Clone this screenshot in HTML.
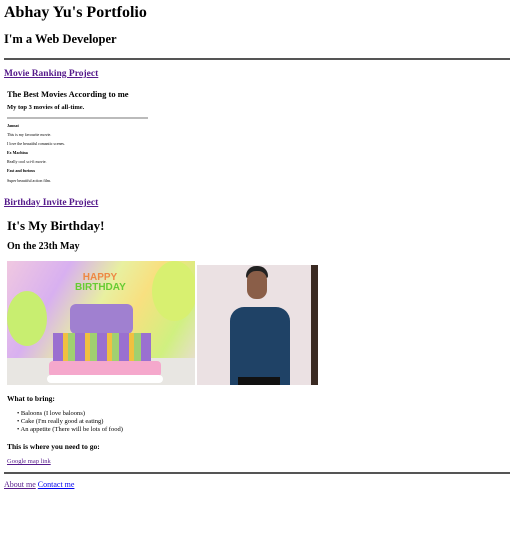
<!DOCTYPE html>
<html><head><meta charset="utf-8"><style>
body{margin:0;width:510px;height:539px;background:#fff;font-family:"Liberation Serif",serif;color:#000;position:relative;overflow:hidden}
.a{position:absolute;white-space:nowrap;margin:0}
a{color:#551a8b}
.lk{font-size:9.5px;font-weight:bold}
</style></head><body>
<div class="a" style="left:4px;top:4px;font-size:16px;font-weight:bold">Abhay Yu's Portfolio</div>
<div class="a" style="left:4px;top:32px;font-size:12.5px;font-weight:bold">I'm a Web Developer</div>
<div class="a" style="left:4px;top:58px;width:506px;height:2px;background:#555"></div>
<div class="a lk" style="left:4px;top:69px"><a href="#">Movie Ranking Project</a></div>
<div class="a" style="left:7px;top:89px;font-size:8.5px;font-weight:bold">The Best Movies According to me</div>
<div class="a" style="left:7px;top:104px;font-size:6.5px;font-weight:bold">My top 3 movies of all-time.</div>
<div class="a" style="left:7px;top:117px;width:141px;height:2px;background:#bbb"></div>
<div class="a" style="left:7px;top:123px;font-size:4px;font-weight:bold">Jannat</div>
<div class="a" style="left:7px;top:132px;font-size:4px">This is my favourite movie.</div>
<div class="a" style="left:7px;top:141px;font-size:4px">I love the beautiful romantic scenes.</div>
<div class="a" style="left:7px;top:150px;font-size:4px;font-weight:bold">Ex Machina</div>
<div class="a" style="left:7px;top:159px;font-size:4px">Really cool sci-fi movie.</div>
<div class="a" style="left:7px;top:168px;font-size:4px;font-weight:bold">Fast and furious</div>
<div class="a" style="left:7px;top:178px;font-size:4px">Super beautiful action film.</div>
<div class="a lk" style="left:4px;top:198px"><a href="#">Birthday Invite Project</a></div>
<div class="a" style="left:7px;top:218px;font-size:13px;font-weight:bold">It's My Birthday!</div>
<div class="a" style="left:7px;top:241px;font-size:10px;font-weight:bold">On the 23th May</div>
<div class="a" style="left:7px;top:261px;width:188px;height:124px;overflow:hidden;background:linear-gradient(120deg,#f0c8e0,#d8b0f0 25%,#e8f0a0 45%,#f8e080 60%,#d0f080 80%,#f0d8e8)">
 <div style="position:absolute;left:0;top:30px;width:40px;height:55px;background:#c8ee70;border-radius:50%"></div>
 <div style="position:absolute;left:145px;top:0;width:45px;height:60px;background:#d8f070;border-radius:50%"></div>
 <div style="position:absolute;left:0;top:97px;width:188px;height:27px;background:#e8e6e2"></div>
 <div style="position:absolute;left:68px;top:12px;width:50px;height:22px;font:bold 10px 'Liberation Sans',sans-serif;text-align:center;line-height:10px;color:#e84">HAPPY<br><span style="color:#6c3">BIRTHDAY</span></div>
 <div style="position:absolute;left:63px;top:43px;width:63px;height:30px;background:#a080d0;border-radius:6px"></div>
 <div style="position:absolute;left:46px;top:72px;width:98px;height:32px;background:repeating-linear-gradient(90deg,#9a70d0 0 10px,#f0c040 10px 15px,#a0d070 15px 22px)"></div>
 <div style="position:absolute;left:42px;top:100px;width:112px;height:16px;background:#f5a8cc;border-radius:4px"></div>
 <div style="position:absolute;left:40px;top:114px;width:116px;height:8px;background:#fff;border-radius:4px"></div>
</div>
<div class="a" style="left:197px;top:265px;width:121px;height:120px;background:#ebe1e3;overflow:hidden">
 <div style="position:absolute;left:49px;top:1px;width:22px;height:12px;background:#222;border-radius:10px 10px 2px 2px"></div>
 <div style="position:absolute;left:50px;top:6px;width:20px;height:28px;background:#8a5e48;border-radius:9px"></div>
 <div style="position:absolute;left:33px;top:42px;width:60px;height:78px;background:#1f4266;border-radius:14px 14px 0 0"></div>
 <div style="position:absolute;left:41px;top:112px;width:42px;height:8px;background:#111"></div>
 <div style="position:absolute;left:114px;top:0;width:7px;height:120px;background:#3a2a22"></div>
</div>
<div class="a" style="left:7px;top:394px;font-size:7.5px;font-weight:bold">What to bring:</div>
<div class="a" style="left:17px;top:410px;font-size:6.5px;line-height:8px">• Baloons (I love baloons)<br>• Cake (I'm really good at eating)<br>• An appetite (There will be lots of food)</div>
<div class="a" style="left:7px;top:442px;font-size:7.5px;font-weight:bold">This is where you need to go:</div>
<div class="a" style="left:7px;top:458px;font-size:6.5px"><a href="#">Google map link</a></div>
<div class="a" style="left:4px;top:472px;width:506px;height:2px;background:#555"></div>
<div class="a" style="left:4px;top:480px;font-size:8px"><a href="#">About me</a> <a href="#" style="color:#0000ee">Contact me</a></div>
</body></html>
